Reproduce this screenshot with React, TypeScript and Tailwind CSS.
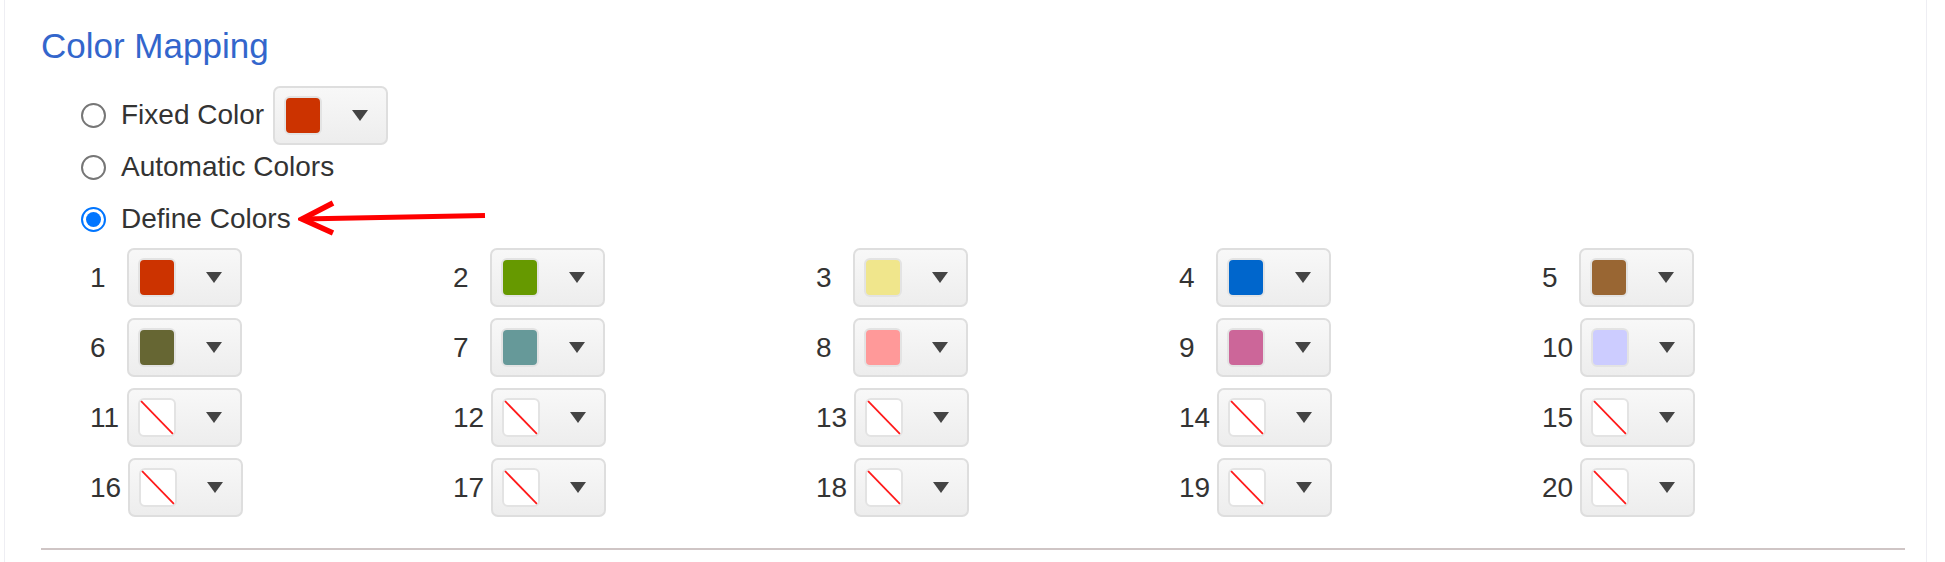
import React from 'react';

const swatches: { n: number; bg: string | null }[] = [
  { n: 1, bg: 'bg-[#cc3300]' },
  { n: 2, bg: 'bg-[#669900]' },
  { n: 3, bg: 'bg-[#f0e68c]' },
  { n: 4, bg: 'bg-[#0066cc]' },
  { n: 5, bg: 'bg-[#996633]' },
  { n: 6, bg: 'bg-[#666633]' },
  { n: 7, bg: 'bg-[#669999]' },
  { n: 8, bg: 'bg-[#ff9999]' },
  { n: 9, bg: 'bg-[#cc6699]' },
  { n: 10, bg: 'bg-[#ccccff]' },
  ...Array.from({ length: 10 }, (_, i) => ({ n: i + 11, bg: null })),
];

function ColorButton({ bg }: { bg: string | null }) {
  return (
    <button className="flex h-[59px] w-[115px] shrink-0 items-center rounded-[7px] border-2 border-[#dedede] bg-linear-to-b from-[#f8f8f8] to-[#ededed] pl-[9px]">
      {bg ? (
        <span className={`block h-[39px] w-[38px] rounded-[6px] border-2 border-[#e3e3e3] ${bg}`} />
      ) : (
        <span className="block h-[39px] w-[38px] overflow-hidden rounded-[6px] border-2 border-[#e3e3e3] bg-white">
          <svg width="34" height="35" viewBox="0 0 34 35" className="block">
            <line x1="0" y1="0" x2="34" y2="35" stroke="#ff1a1a" strokeWidth="1.8" />
          </svg>
        </span>
      )}
      <span className="ml-[30px] h-0 w-0 border-x-[8px] border-t-[11px] border-x-transparent border-t-[#444]" />
    </button>
  );
}

function Radio({ checked }: { checked?: boolean }) {
  if (checked) {
    return (
      <span className="flex h-[25px] w-[25px] shrink-0 items-center justify-center rounded-full border-2 border-[#0075ff] bg-white">
        <span className="h-[15px] w-[15px] rounded-full bg-[#0075ff]" />
      </span>
    );
  }
  return <span className="h-[25px] w-[25px] shrink-0 rounded-full border-2 border-[#767676] bg-white" />;
}

export default function App() {
  return (
    <div className="h-[562px] bg-white font-['Liberation_Sans',Arial,sans-serif] text-[#333]">
      <div className="ml-[4px] h-[562px] w-[1923px] border-x border-[#eeeef3] pl-[36px] pr-[21px]">
        <h2 className="pt-[26px] text-[35px] leading-[40px] text-[#3366cc]">Color Mapping</h2>

        <div className="mt-[23px] ml-[40px] flex flex-col text-[28px]">
          <label className="flex h-[52px] items-center">
            <Radio />
            <span className="ml-[15px]">Fixed Color</span>
            <span className="ml-[9px]">
              <ColorButton bg="bg-[#cc3300]" />
            </span>
          </label>
          <label className="flex h-[52px] items-center">
            <Radio />
            <span className="ml-[15px]">Automatic Colors</span>
          </label>
          <label className="flex h-[52px] items-center">
            <Radio checked />
            <span className="ml-[15px]">Define Colors</span>
            <svg width="190" height="36" viewBox="0 0 190 36" className="ml-[7px] mt-[-3px]">
              <line x1="4" y1="19" x2="187" y2="15.5" stroke="#ff0000" strokeWidth="5" />
              <polyline points="35,3 4,19 35,33" fill="none" stroke="#ff0000" strokeWidth="5.5" strokeLinejoin="miter" />
            </svg>
          </label>
        </div>

        <div className="mt-[3px] ml-[49px] grid grid-cols-5 gap-y-[11px] text-[28px]">
          {swatches.map((s) => (
            <div key={s.n} className="flex items-center">
              <span className="min-w-[37px] pr-[7px]">{s.n}</span>
              <ColorButton bg={s.bg} />
            </div>
          ))}
        </div>

        <div className="mt-[31px] h-[2px] bg-[#cfc5c5]" />
      </div>
    </div>
  );
}
